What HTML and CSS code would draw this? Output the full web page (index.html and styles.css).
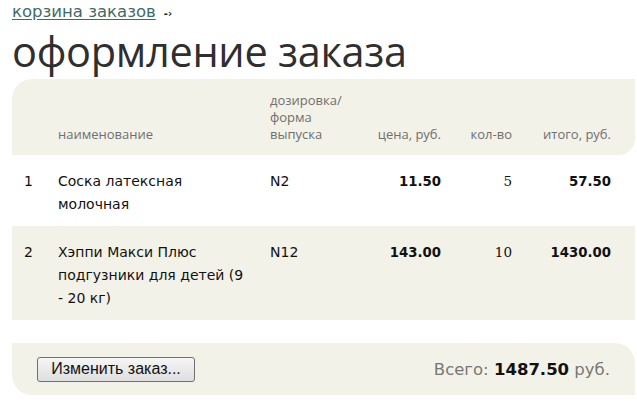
FILE: index.html
```html
<!DOCTYPE html>
<html lang="ru">
<head>
<meta charset="utf-8">
<link rel="stylesheet" href="styles.css">
</head>
<body>
<div class="page">
  <div class="crumbs"><a href="#" class="crumb-link">корзина заказов</a><span class="crumb-arrow">-›</span></div>
  <h1 class="title">оформление заказа</h1>
  <table class="order">
    <colgroup>
      <col class="c-num"><col class="c-name"><col class="c-dose"><col class="c-price"><col class="c-qty"><col class="c-total">
    </colgroup>
    <thead>
      <tr>
        <th class="h-first"></th>
        <th class="h-left">наименование</th>
        <th class="h-left">дозировка/<br>форма<br>выпуска</th>
        <th class="h-right h-price">цена, руб.</th>
        <th class="h-right h-qty">кол-во</th>
        <th class="h-right h-last">итого, руб.</th>
      </tr>
    </thead>
    <tbody>
      <tr class="row">
        <td class="num">1</td>
        <td class="name">Соска латексная молочная</td>
        <td class="dose">N2</td>
        <td class="price">11.50</td>
        <td class="qty">5</td>
        <td class="total">57.50</td>
      </tr>
      <tr class="row row-alt">
        <td class="num">2</td>
        <td class="name">Хэппи Макси Плюс подгузники для детей (9 - 20 кг)</td>
        <td class="dose">N12</td>
        <td class="price">143.00</td>
        <td class="qty">10</td>
        <td class="total">1430.00</td>
      </tr>
    </tbody>
  </table>
  <div class="footer">
    <button class="btn" type="button">Изменить заказ...</button>
    <div class="sum">Всего: <b class="sum-val">1487.50</b> руб.</div>
  </div>
</div>
</body>
</html>
```
FILE: styles.css
```css
html, body { margin: 0; padding: 0; background: #fff; }
.page { padding: 0 2px 0 12px; font-family: "DejaVu Sans", Tahoma, sans-serif; }

.crumbs { height: 26px; display: flex; align-items: flex-start; padding-top: 2px; box-sizing: border-box; }
.crumb-link { font-family: "DejaVu Sans", sans-serif; font-size: 16.5px; line-height: 20px; color: #3f6b6a; text-decoration: underline; text-underline-offset: 2px; }
.crumb-arrow { font-size: 10px; font-weight: bold; color: #222; margin-left: 8px; margin-top: 6px; }

.title { margin: 0; font-family: "Open Sans", sans-serif; font-weight: normal; font-size: 41.5px; line-height: 50px; color: #2f2f2f; letter-spacing: -0.3px; height: 53px; }

.order { width: 623px; border-collapse: separate; border-spacing: 0; table-layout: fixed; }
.c-num { width: 46px; } .c-name { width: 212px; } .c-dose { width: 80px; } .c-price { width: 105px; } .c-qty { width: 70px; } .c-total { width: 110px; }

.order th { background: #f3f2e9; height: 76px; vertical-align: bottom; padding: 0 0 12px; font-family: "Open Sans", sans-serif; font-weight: normal; font-size: 13px; line-height: 17px; color: #6f6f6f; box-sizing: border-box; }
.h-left { text-align: left; }
.h-right { text-align: right; }
.h-first { border-top-left-radius: 20px; }
.h-last { border-bottom-right-radius: 16px; padding-right: 24px !important; }
.h-price { padding-right: 14px !important; }
.h-qty { padding-right: 13px !important; }

.row td { vertical-align: top; padding: 15px 0 10px; font-size: 14px; line-height: 23px; color: #111; }
.row-alt td { background: #f3f2e9; }
.num { padding-left: 12px !important; }
.name { padding-right: 24px !important; }
.price { text-align: right; font-weight: bold; font-size: 13.3px !important; padding-right: 14px !important; }
.qty { text-align: right; font-family: "DejaVu Serif", serif; font-size: 13.5px !important; padding-right: 13px !important; }
.total { text-align: right; font-weight: bold; font-size: 13.3px !important; padding-right: 24px !important; }

.footer { margin-top: 23px; width: 623px; height: 52px; box-sizing: border-box; background: #f3f2e9; border-top-right-radius: 20px; border-bottom-left-radius: 20px; display: flex; align-items: center; justify-content: space-between; padding: 0 25px; }
.btn { font-family: "Liberation Sans", Arial, sans-serif; font-size: 16px; color: #111; height: 25px; width: 158px; padding: 0; border: 1px solid #707070; border-radius: 3px; background: linear-gradient(#f6f6f6, #dedede); }
.sum { font-family: "DejaVu Sans", sans-serif; font-size: 16.5px; color: #777; }
.sum-val { color: #111; }
```
